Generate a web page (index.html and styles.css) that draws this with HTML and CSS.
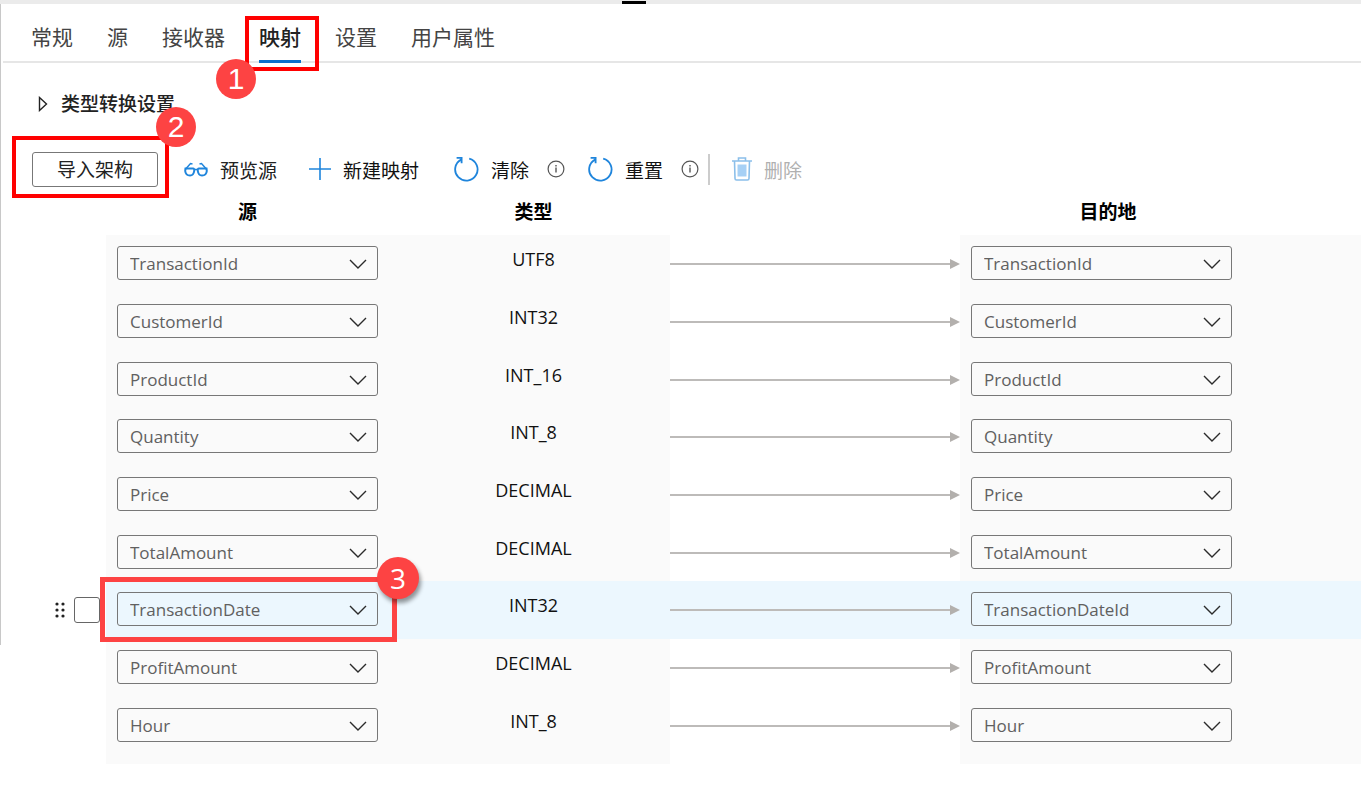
FILE: index.html
```html
<!DOCTYPE html>
<html lang="zh-CN">
<head>
<meta charset="utf-8">
<title>映射</title>
<meta name="viewport" content="width=device-width, initial-scale=1">
<link rel="stylesheet" href="styles.css">
</head>
<body>
<svg class="defs" aria-hidden="true">
  <symbol id="chevron" viewBox="0 0 18 10"><path d="M1 1l8 8 8-8" fill="none" stroke="#2b2b2b" stroke-width="1.4"/></symbol>
  <symbol id="refresh" viewBox="0 0 26 26"><path d="M16.200 2.600A11.200 11.200 0 1 1 8 3.600M3.600 1.800h5v5.400" fill="none" stroke="#1f85dc" stroke-width="1.8"/></symbol>
  <symbol id="info" viewBox="0 0 18 18"><circle cx="9" cy="9" r="7.9" fill="none" stroke="#555" stroke-width="1.2"/><path d="M9 7.500v5M9 5v1.400" stroke="#555" stroke-width="1.400"/></symbol>
</svg>
<div class="splitter"><span class="splitter-grip"></span></div>
<nav class="tabs">
  <a class="tab" href="#general">常规</a>
  <a class="tab" href="#source">源</a>
  <a class="tab" href="#sink">接收器</a>
  <a class="tab tab-active" href="#mapping" aria-current="page">映射<span class="frame frame-tab"></span><span class="badge badge-tab">1</span></a>
  <a class="tab" href="#settings">设置</a>
  <a class="tab" href="#user">用户属性</a>
</nav>
<main>
  <button class="disclosure" type="button" aria-expanded="false">
    <svg width="10" height="16" viewBox="0 0 10 16" aria-hidden="true"><path d="M1.5 1.5v13L8.5 8z" fill="none" stroke="#222" stroke-width="1.4"/></svg>
    类型转换设置
  </button>
  <div class="toolbar">
    <div class="import">
      <button class="import-button" type="button">导入架构</button>
      <span class="frame frame-import"></span><span class="badge badge-import">2</span>
    </div>
    <button class="tool preview" type="button">
      <svg width="24" height="18" viewBox="0 0 24 18" fill="none" stroke="#1f85dc" stroke-width="2" aria-hidden="true"><path d="M1.500 8.500h7.500q1.500 0 1.200 2.500c-.4 3-2 4.500-4.200 4.500S1.500 14 1.200 11ZM22.500 8.500H15q-1.500 0-1.200 2.500c.4 3 2 4.500 4.200 4.500s4.500-1.500 4.800-4.500Z"/><path d="M10 9.500h4M1.200 9.500L6.500 3.500l2 .5M22.800 9.500l-5.300-6-2 .5" stroke-width="1.500"/></svg>
      预览源
    </button>
    <button class="tool add" type="button">
      <svg width="22" height="22" viewBox="0 0 22 22" aria-hidden="true"><path d="M11 0v22M0 11h22" stroke="#1f85dc" stroke-width="1.6"/></svg>
      新建映射
    </button>
    <button class="tool clear" type="button"><svg width="26" height="26" aria-hidden="true"><use href="#refresh"/></svg>清除</button>
    <button class="info" type="button" aria-label="清除"><svg width="18" height="18" aria-hidden="true"><use href="#info"/></svg></button>
    <button class="tool reset" type="button"><svg width="26" height="26" aria-hidden="true"><use href="#refresh"/></svg>重置</button>
    <button class="info" type="button" aria-label="重置"><svg width="18" height="18" aria-hidden="true"><use href="#info"/></svg></button>
    <span class="divider"></span>
    <button class="tool delete" type="button" disabled>
      <svg width="20" height="24" viewBox="0 0 20 24" aria-hidden="true"><path d="M0 4h20M6.500 4V1h7v3M2.500 4l.5 17.500q0 1.500 1.500 1.500h11q1.500 0 1.500-1.500L17.500 4" fill="none" stroke="#8bbfea" stroke-width="1.6"/><path d="M5.500 7.500h9v12h-9z" fill="#a6d0f5"/></svg>
      删除
    </button>
  </div>
  <table class="mapping">
    <colgroup><col class="col-tools"><col class="col-source"><col class="col-type"><col class="col-link"><col></colgroup>
    <thead><tr><td></td><th class="source" scope="col">源</th><th scope="col">类型</th><td></td><th class="target-head" scope="col">目的地</th></tr></thead>
    <tbody id="rows"></tbody>
  </table>
</main>
<script src="mapping.js"></script>
</body>
</html>
```

FILE: styles.css
```css
* { box-sizing: border-box; }
body {
  margin: 0;
  color: #111;
  background: linear-gradient(#c8c8c8, #c8c8c8) 0 0 / 1px 645px no-repeat #fff;
  font: 19px/24px "Open Sans", "Noto Sans CJK SC", sans-serif;
}
button { padding: 0; border: 0; background: none; color: inherit; font: inherit; white-space: nowrap; }
svg { flex: none; }
.defs { display: none; }

.splitter { display: flex; height: 4px; padding-left: 622px; background: #ebebeb; }
.splitter-grip { width: 24px; height: 3px; margin-top: 1px; background: #000; }

.tabs {
  display: flex;
  gap: 34px;
  height: 59px;
  margin-left: 3px;
  padding: 16px 0 0 28px;
  border-bottom: 2px solid #e6e6e6;
}
.tab { position: relative; height: 43px; padding-top: 5px; color: #444; font-size: 21px; text-decoration: none; white-space: nowrap; }
.tab-active { border-bottom: 3px solid #0a70cc; color: #222; font-weight: 500; }

.frame { position: absolute; z-index: 1; border: 4px solid #f00; pointer-events: none; }
.frame-tab { inset: -4px -18px -11px -14px; }
.frame-import { inset: -16px -11px -11px -20px; }
.frame-row { inset: -4px 0 -3px -6px; border: 5px solid #fd4343; }
.badge {
  position: absolute;
  z-index: 2;
  width: 40px;
  height: 40px;
  border-radius: 50%;
  background: #fd4343;
  color: #fff;
  font: 30px/40px "Liberation Sans", sans-serif;
  text-align: center;
}
.badge-tab { top: 39px; left: -43px; }
.badge-import { top: -45px; right: -38px; }
.badge-row { top: -24px; right: -22px; width: 42px; height: 42px; font: 500 28px/42px "Open Sans", sans-serif; box-shadow: 2px 4px 4px #0006; }

.disclosure { display: flex; align-items: center; gap: 13px; margin: 29px 0 0 38px; color: #222; font-weight: 500; }

.toolbar { display: flex; align-items: center; height: 36px; margin: 35px 0 0 32px; color: #222; }
.import { position: relative; }
.import-button { width: 126px; height: 35px; padding-top: 2px; border: 1px solid #777; border-radius: 3px; }
.tool { display: flex; align-items: center; gap: 12px; margin-top: 3px; }
.tool svg { margin-bottom: 3px; }
.preview { margin-left: 26px; }
.add { margin-left: 32px; color: #111; }
.clear { margin-left: 34px; color: #111; }
.reset { margin-left: 22px; color: #111; }
.delete { margin-left: 22px; color: #b0b0b0; }
.info { display: flex; margin-left: 18px; }
.divider { width: 2px; height: 31px; margin-left: 9px; background: #ccc; }

.mapping { width: 100%; border-collapse: collapse; table-layout: fixed; }
.col-tools { width: 106px; }
.col-source { width: 291px; }
.col-type { width: 273px; }
.col-link { width: 290px; }
.mapping td, .mapping th { padding: 0; vertical-align: top; }
.mapping thead tr { height: 48px; }
.mapping th { padding-top: 13px; font-weight: 700; color: #000; }
.mapping .source { position: relative; padding-right: 19px; padding-left: 11px; }
.mapping .target { padding-left: 11px; }
.mapping .target-head { padding-right: 105px; }
.mapping tbody tr { height: 58px; }
.mapping tbody tr:nth-child(3n) { height: 57px; }
.mapping tbody tr:last-child { height: 67px; }
.mapping tbody td { padding-top: 11px; }
.mapping .source, .mapping .target, .mapping .type { background: #fafafa; }
.mapping thead .source { background: none; }
.mapping .selected td:not(:first-child) { background: #ecf7fe; }
.mapping tbody .type { padding-top: 12px; font-size: 18px; text-align: center; }

.picker { display: flex; align-items: center; position: relative; width: 261px; max-width: 100%; }
.picker select {
  width: 100%;
  height: 34px;
  padding: 2px 40px 0 12px;
  border: 1px solid #777;
  border-radius: 3px;
  background: transparent;
  color: #606060;
  font: 17px/24px "Open Sans", sans-serif;
  appearance: none;
}
.picker svg { position: absolute; top: 13px; right: 11px; pointer-events: none; }

.link { display: flex; align-items: center; height: 36px; }
.link::before { content: ""; flex: 1; height: 2px; background: #bdbbb9; }
.link::after { content: ""; border: solid transparent; border-width: 5px 0 5px 10px; border-left-color: #b3b0ad; }

.row-tools { display: flex; align-items: center; justify-content: flex-end; gap: 9px; height: 36px; padding-right: 6px; }
.row-tools input { width: 26px; height: 26px; margin: 0; border: 1px solid #666; border-radius: 3px; background: #fff; appearance: none; }
```

FILE: mapping.js
```js
const rows = [
  ["TransactionId", "UTF8"],
  ["CustomerId", "INT32"],
  ["ProductId", "INT_16"],
  ["Quantity", "INT_8"],
  ["Price", "DECIMAL"],
  ["TotalAmount", "DECIMAL"],
  ["TransactionDate", "INT32", "TransactionDateId"],
  ["ProfitAmount", "DECIMAL"],
  ["Hour", "INT_8"]
];
const picker = (label, value) => `<div class="picker"><select aria-label="${label}"><option>${value}</option></select><svg width="18" height="10" aria-hidden="true"><use href="#chevron"/></svg></div>`;
const dots = [2, 8, 14].map(y => `<circle cx="2" cy="${y}" r="1.600"/><circle cx="8" cy="${y}" r="1.600"/>`).join("");
const tools = `<div class="row-tools"><svg width="10" height="16" fill="#222" aria-hidden="true">${dots}</svg><input type="checkbox" aria-label="TransactionDate"></div>`;
const marks = `<span class="frame frame-row"></span><span class="badge badge-row">3</span>`;
document.getElementById("rows").innerHTML = rows.map(([source, type, target]) => `
  <tr class="${target ? "selected" : ""}">
    <td>${target ? tools : ""}</td>
    <td class="source">${picker("源", source)}${target ? marks : ""}</td>
    <td class="type">${type}</td>
    <td><div class="link"></div></td>
    <td class="target">${picker("目的地", target || source)}</td>
  </tr>`).join("");
```
